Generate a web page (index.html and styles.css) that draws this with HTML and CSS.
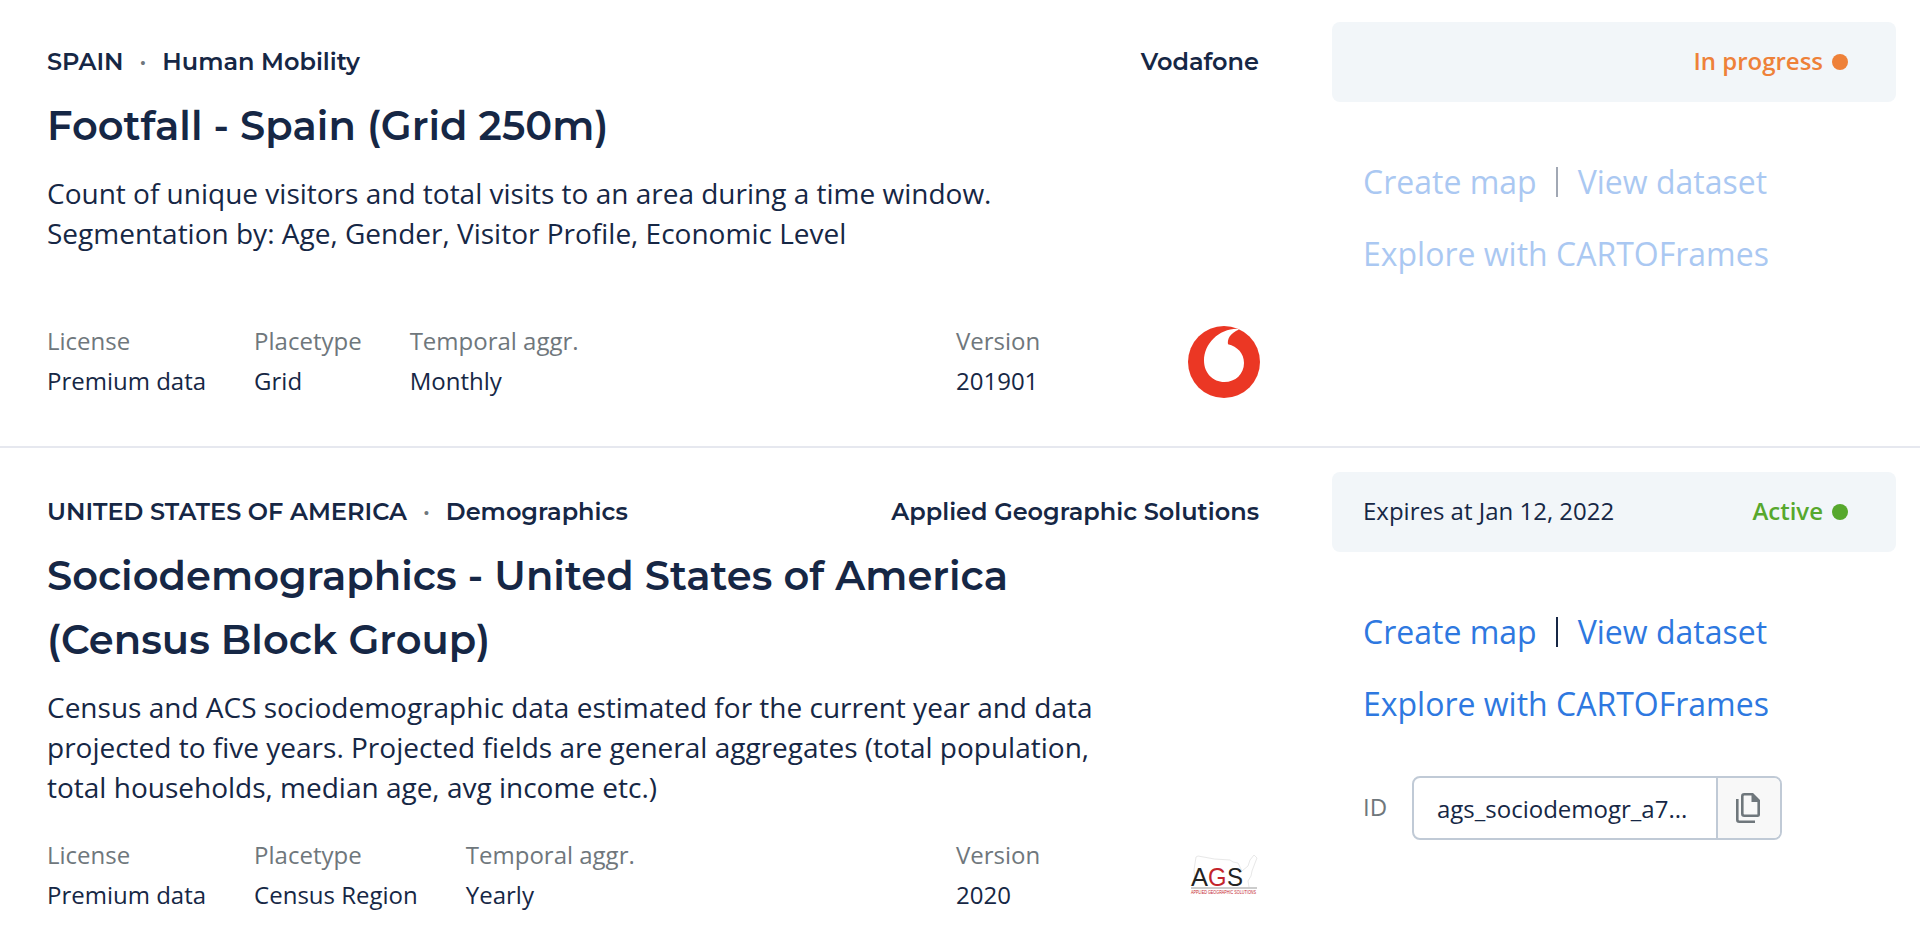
FILE: index.html
```html
<!DOCTYPE html>
<html lang="en">
<head>
<meta charset="utf-8">
<title>Your subscriptions</title>
<link rel="stylesheet" href="styles.css">
</head>
<body>
<main class="list">
  <article class="item">
    <section class="info">
      <header class="info-head">
        <p class="crumbs"><span>SPAIN</span><span class="dot">·</span><span>Human Mobility</span></p>
        <p>Vodafone</p>
      </header>
      <h2 class="title">Footfall - Spain (Grid 250m)</h2>
      <p class="desc">Count of unique visitors and total visits to an area during a time window.<br>Segmentation by: Age, Gender, Visitor Profile, Economic Level</p>
      <footer class="meta">
        <dl class="fact"><dt>License</dt><dd>Premium data</dd></dl>
        <dl class="fact"><dt>Placetype</dt><dd>Grid</dd></dl>
        <dl class="fact"><dt>Temporal aggr.</dt><dd>Monthly</dd></dl>
        <dl class="fact version"><dt>Version</dt><dd>201901</dd></dl>
        <svg class="logo" viewBox="0 0 72 72" role="img" aria-label="Vodafone">
          <circle cx="36" cy="36" r="36" fill="#eb3724"/>
          <path d="M51 3.400C42 7.400 39.200 12.500 40 18.300C49.500 20.500 56 27.500 56 37C56 48 47.500 56 36.300 56C25 56 16 47 16 34.500C16 18 31 2.500 49.500 2.800Z" fill="#fff"/>
        </svg>
      </footer>
    </section>
    <aside class="side">
      <div class="status"><span class="expires"></span><span class="state state-progress">In progress</span></div>
      <nav class="actions disabled">
        <div class="links"><a>Create map</a><i class="bar"></i><a>View dataset</a></div>
        <a>Explore with CARTOFrames</a>
      </nav>
    </aside>
  </article>

  <article class="item">
    <section class="info">
      <header class="info-head">
        <p class="crumbs"><span>UNITED STATES OF AMERICA</span><span class="dot">·</span><span>Demographics</span></p>
        <p>Applied Geographic Solutions</p>
      </header>
      <h2 class="title">Sociodemographics - United States of America<br>(Census Block Group)</h2>
      <p class="desc">Census and ACS sociodemographic data estimated for the current year and data<br>projected to five years. Projected fields are general aggregates (total population,<br>total households, median age, avg income etc.)</p>
      <footer class="meta">
        <dl class="fact"><dt>License</dt><dd>Premium data</dd></dl>
        <dl class="fact"><dt>Placetype</dt><dd>Census Region</dd></dl>
        <dl class="fact"><dt>Temporal aggr.</dt><dd>Yearly</dd></dl>
        <dl class="fact version"><dt>Version</dt><dd>2020</dd></dl>
        <svg class="logo" viewBox="0 0 72 72" role="img" aria-label="Applied Geographic Solutions">
          <path d="M10 16L8 17L6 30L7 40M10 16Q27 20 42 20L45 22L50 23L54 31L60 26L62 20L66 15L69 18L67 23L64 31L63 36L60 41L61 47" fill="none" stroke="#e8e8e8" stroke-width="1"/>
          <g class="ags-name"><text x="3" y="45.500" textLength="17" lengthAdjust="spacingAndGlyphs" fill="#222">A</text><text x="20" y="45.500" textLength="18.500" lengthAdjust="spacingAndGlyphs" fill="#c4242b">G</text><text x="39" y="45.500" textLength="16" lengthAdjust="spacingAndGlyphs" fill="#222">S</text></g>
          <path d="M3 48H69" stroke="#999" stroke-width="1"/>
          <text class="ags-tag" x="3" y="53.500" textLength="65" lengthAdjust="spacingAndGlyphs">APPLIED GEOGRAPHIC SOLUTIONS</text>
        </svg>
      </footer>
    </section>
    <aside class="side">
      <div class="status"><span class="expires">Expires at Jan 12, 2022</span><span class="state state-active">Active</span></div>
      <nav class="actions">
        <div class="links"><a>Create map</a><i class="bar"></i><a>View dataset</a></div>
        <a>Explore with CARTOFrames</a>
      </nav>
      <div class="id-row">
        <span class="id-label">ID</span>
        <div class="id-box">
          <span class="id-value">ags_sociodemogr_a7...</span>
          <button class="copy" aria-label="Copy">
            <svg width="24" height="30" viewBox="0 0 24 30" fill="none" stroke="#6f777c" stroke-width="2.600">
              <path d="M8.300 1.300H16.500L22.700 7.500V21.500Q22.700 22.700 21.500 22.700H8.300Q6.300 22.700 6.300 20.700V3.300Q6.300 1.300 8.300 1.300Z"/>
              <path d="M15.500 1H17L23.500 7.500V9H15.500Z" fill="#6f777c" stroke="none"/>
              <path d="M1.300 6V26.700Q1.300 28.700 3.300 28.700H19"/>
            </svg>
          </button>
        </div>
      </div>
    </aside>
  </article>
</main>
</body>
</html>
```
FILE: styles.css
```css
* { box-sizing: border-box; margin: 0; padding: 0; }
body { background: #fff; color: #162745; font-family: "Open Sans", "Noto Sans", sans-serif; overflow: hidden; }

.list { width: 1920px; margin-top: -2px; }
.item { display: flex; height: 450px; padding: 24px 24px 0 47px; border-bottom: 2px solid #e6e8ef; }
.item:last-child { border-bottom: 0; height: 502px; }

.info { display: flex; flex-direction: column; width: 1213px; height: 379px; padding-top: 22px; }
.item:last-child .info { height: 443px; }
.info-head { display: flex; justify-content: space-between; padding-right: 1px; }
.info-head, .title { font-family: Montserrat, Inter, sans-serif; font-weight: 600; }
.info-head { font-size: 24px; line-height: 36px; }
.crumbs { display: flex; }
.dot { margin: 0 16px; color: #6f777c; }
.title { font-size: 40px; line-height: 64px; margin-top: 14px; white-space: nowrap; letter-spacing: 0.04px; }
.desc { font-size: 28px; line-height: 40px; margin-top: 15px; white-space: nowrap; }

.meta { display: flex; gap: 48px; height: 80px; margin-top: auto; }
.fact { font-size: 24px; line-height: 40px; white-space: nowrap; }
.fact dt { color: #6f777c; }
.version { margin-left: auto; width: 184px; }
.logo { width: 72px; height: 72px; margin-top: 5px; overflow: visible; }
.ags-name { font: 25px "Liberation Sans", sans-serif; }
.ags-tag { font: 5px "Liberation Sans", sans-serif; fill: #c4242b; }

.side { width: 564px; margin-left: 72px; }
.status { display: flex; align-items: center; justify-content: space-between; height: 80px; padding: 0 48px 0 31px; border-radius: 8px; background: #f2f6f9; font-size: 24px; line-height: 34px; }
.status span { padding-bottom: 2px; }
.state { display: flex; align-items: center; gap: 9px; font-weight: 600; }
.state::after { content: ""; width: 16px; height: 16px; margin-top: 2px; border-radius: 50%; background: currentColor; }
.state-progress { color: #ee8139; }
.state-active { color: #57a82d; }

.actions { display: flex; flex-direction: column; gap: 24px; padding: 56px 0 0 31px; font-size: 32px; line-height: 48px; color: #2e78e0; white-space: nowrap; }
.disabled { opacity: .4; }
.links { display: flex; align-items: center; }
.bar { width: 2px; height: 30px; margin: 0 20px 0 19px; background: #162745; }

.id-row { display: flex; align-items: center; padding: 48px 0 0 31px; font-size: 24px; }
.id-label { width: 49px; padding-bottom: 2px; color: #6f777c; line-height: 36px; }
.id-box { display: flex; width: 370px; height: 64px; border: 2px solid #c0cad6; border-radius: 8px; overflow: hidden; }
.id-value { flex: 1; padding-left: 23px; line-height: 62px; }
.copy { display: flex; align-items: center; justify-content: center; width: 64px; padding-right: 2px; border: 0; border-left: 2px solid #c0cad6; background: #f8f8f8; }
```
